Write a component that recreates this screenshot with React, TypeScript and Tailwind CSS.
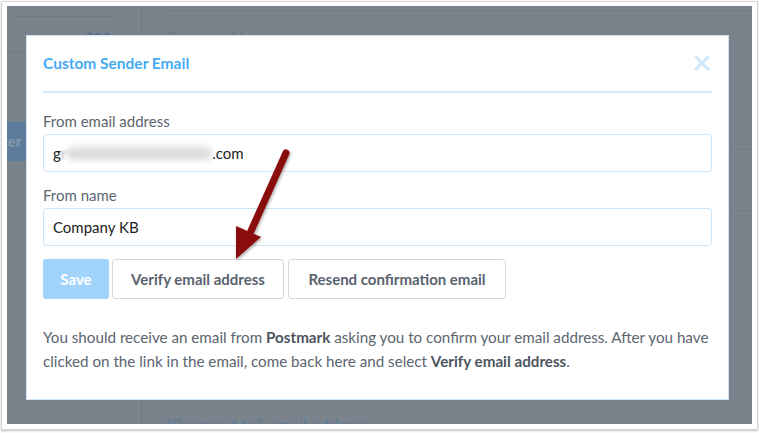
import React from 'react';

const font = { fontFamily: 'Lato, "Open Sans", sans-serif' };

const Arrow: React.FC = () => (
  <svg className="absolute left-[195px] top-[115px] pointer-events-none" width="110" height="150" viewBox="0 0 110 150">
    <defs>
      <filter id="sh" x="-30%" y="-20%" width="160%" height="140%">
        <feDropShadow dx="1" dy="1.5" stdDeviation="1.5" floodColor="#000" floodOpacity="0.35" />
      </filter>
    </defs>
    <g filter="url(#sh)">
      <line x1="84" y1="32" x2="49" y2="110" stroke="#8a0a0a" strokeWidth="7" strokeLinecap="round" />
      <polygon points="34,138 34,105 59,116" fill="#8a0a0a" />
    </g>
  </svg>
);

export default function App() {
  return (
    <div className="w-[759px] h-[433px] bg-white p-[1px]" style={font}>
      <div className="w-[757px] h-[429px] border border-[#d4d4d4] shadow-[0_1px_2px_rgba(0,0,0,0.25)] pl-[5px] pt-[4px]">
        <div className="relative w-[745px] h-[418px] bg-[#7a828b] flex overflow-hidden">
          {/* page behind overlay */}
          <div className="w-[135px] border-r border-[#717982] flex flex-col">
            <div className="h-[11px] border-b border-[#717982] ml-[10px] mr-[30px]" />
            <div className="h-[35px] border-b border-[#717982] flex items-end justify-end pr-[30px] pb-[2px] text-[15px] text-[#4f6c8a]">$20</div>
            <div className="h-[70px]" />
            <div className="h-[39px] bg-[#5d7c9b] flex items-center text-[15px] font-bold text-[#8397ab] -ml-[7px]">ger</div>
          </div>
          <div className="flex-1 flex flex-col">
            <div className="h-[5px] border-b border-[#737b84] ml-[24px]" />
            <div className="pl-[24px] pt-[15px] text-[15px] text-[#6b737c]">Company Name</div>
            <div className="mt-[100px] h-[1px] bg-[#737b84] ml-[24px]" />
            <div className="mt-[60px] h-[1px] bg-[#737b84] ml-[24px]" />
            <div className="mt-auto pl-[24px] text-[17px] text-[#5d7c9b] translate-y-[14px]">"Respond to" email address</div>
          </div>

          {/* modal */}
          <div className="absolute left-[19px] top-[29px] w-[703px] h-[365px] bg-white border border-[#cde3f6] px-[16px]">
            <div className="flex items-center justify-between h-[57px] border-b-2 border-[#d6eafb]">
              <h2 className="text-[15.5px] font-bold text-[#45aaf2] pt-[1px]">Custom Sender Email</h2>
              <svg width="18" height="18" viewBox="0 0 18 18" className="mr-[1px] mt-[-1px]">
                <path d="M2 2 L16 16 M16 2 L2 16" stroke="#d4e9fb" strokeWidth="3.2" />
              </svg>
            </div>

            <label className="block mt-[18px] text-[15px] leading-[20px] text-[#5b6570]">From email address</label>
            <div className="mt-[3px] h-[38px] border border-[#cfe5f7] rounded-[3px] flex items-center px-[9px] text-[15px] text-[#222]">
              <span>g</span>
              <span className="text-[#aaa] blur-[1px]">r</span>
              <span className="inline-block w-[146px] h-[13px] rounded-full bg-[#dcdcdc] blur-[3px]" />
              <span>.com</span>
            </div>

            <label className="block mt-[13px] text-[15px] leading-[20px] text-[#5b6570]">From name</label>
            <div className="mt-[3px] h-[38px] border border-[#cfe5f7] rounded-[3px] flex items-center px-[9px] text-[15px] text-[#222]">
              Company KB
            </div>

            <div className="flex gap-[3px] mt-[13px]">
              <button className="h-[40px] w-[66px] rounded-[3px] bg-[#a2d4fb] text-white font-bold text-[15px]">Save</button>
              <button className="h-[40px] w-[172px] rounded-[3px] border border-[#d3d9de] text-[#59636e] font-bold text-[15px]">Verify email address</button>
              <button className="h-[40px] w-[218px] ml-[1px] rounded-[3px] border border-[#d3d9de] text-[#59636e] font-bold text-[15px]">Resend confirmation email</button>
            </div>

            <p className="mt-[26px] text-[15.2px] leading-[24px] text-[#5b6570]">
              You should receive an email from <b className="text-[#4c5560]">Postmark</b> asking you to confirm your email address. After you have clicked on the link in the email, come back here and select <b className="text-[#4c5560]">Verify email address</b>.
            </p>
          </div>
          <Arrow />
        </div>
      </div>
    </div>
  );
}
